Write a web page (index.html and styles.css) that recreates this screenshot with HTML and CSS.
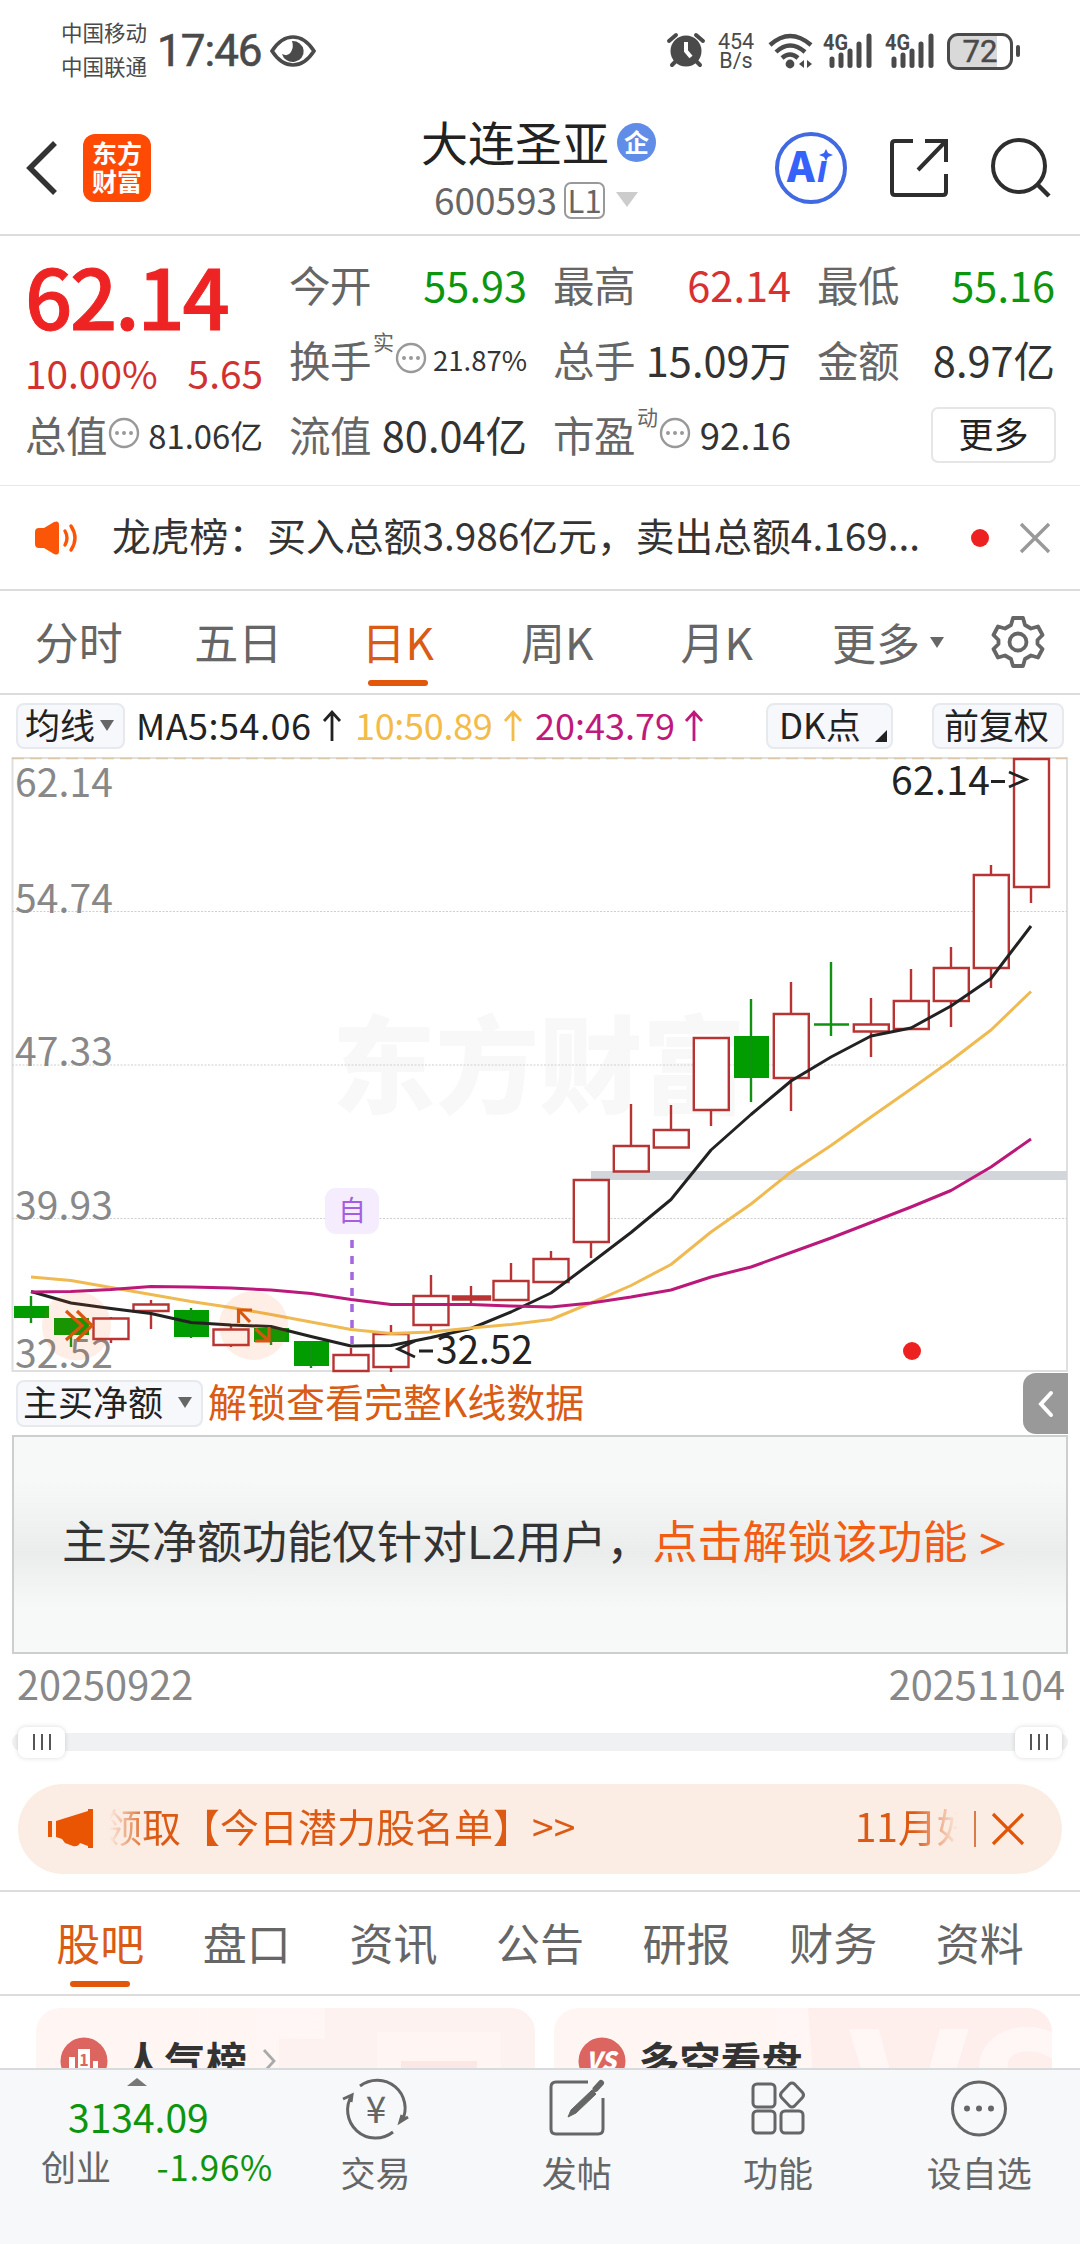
FILE: index.html
```html
<!DOCTYPE html>
<html lang="zh-CN">

<head>
    <title>大连圣亚 600593</title>
    <meta charset="UTF-8">
    <link rel="stylesheet" href="styles.css">
</head>

<body>
    <div class="status-bar">
        <div class="carriers">
            <span>中国移动</span>
            <span>中国联通</span>
        </div>
        <span class="clock">17:46</span>
        <svg class="eye" width="46" height="32" viewBox="0 0 46 32">
            <path d="M2 16Q11 2 23 2Q35 2 44 16Q35 30 23 30Q11 30 2 16Z" fill="none" stroke="#4a4a4a" stroke-width="3.6" />
            <path d="M22 6a11 10.500 0 1 1-10 13q6 3 9-2q3-5 1-11Z" fill="#4a4a4a" />
        </svg>
        <svg class="alarm" width="38" height="36" viewBox="0 0 38 36">
            <circle cx="19" cy="19" r="15.500" fill="#4a4a4a" />
            <path d="M2 9L9 3M36 9L29 3M9 29L5 33M29 29L33 33" fill="none" stroke="#4a4a4a" stroke-width="4" stroke-linecap="round" />
            <path d="M19 10V19L24 25" fill="none" stroke="#fff" stroke-width="4" />
        </svg>
        <div class="net-speed">
            <span>454</span>
            <span>B/s</span>
        </div>
        <svg class="wifi" width="46" height="36" viewBox="0 0 46 36">
            <path d="M2 12Q22-6 43 12M8 19Q22 6 37 19M14 25Q22 18 30 25" fill="none" stroke="#4a4a4a" stroke-width="4.4" />
            <circle cx="22" cy="31" r="4.4" fill="#4a4a4a" />
            <path d="M36 27V35L31 31ZM39 27V35L44 31Z" fill="#4a4a4a" />
        </svg>
        <svg class="signal" width="50" height="36" viewBox="0 0 50 36">
            <text x="0" y="17" class="signal-text" textLength="25" lengthAdjust="spacingAndGlyphs">4G</text>
            <path d="M9 26V32.500M18 22V32.500M27 18V32.500M36 11V32.500M46 3V32.500" stroke="#4a4a4a" stroke-width="5" stroke-linecap="round" />
        </svg>
        <svg class="signal" width="50" height="36" viewBox="0 0 50 36">
            <text x="0" y="17" class="signal-text" textLength="25" lengthAdjust="spacingAndGlyphs">4G</text>
            <path d="M9 26V32.500M18 22V32.500M27 18V32.500M36 11V32.500M46 3V32.500" stroke="#4a4a4a" stroke-width="5" stroke-linecap="round" />
        </svg>
        <div class="battery"><span>72</span></div>
        <div class="battery-tip"></div>
    </div>

    <header class="header">
        <div class="header-left">
            <svg width="34" height="56" viewBox="0 0 34 56">
                <path d="M29 3L4 28L29 53" fill="none" stroke="#333" stroke-width="5.5" />
            </svg>
            <div class="logo"><span>东方</span><span>财富</span></div>
        </div>
        <div class="stock">
            <div class="stock-name">大连圣亚<span class="corp">企</span></div>
            <div class="stock-code">600593<span class="level">L1</span><i class="tri tri-code"></i></div>
        </div>
        <div class="header-right">
            <svg width="74" height="74" viewBox="0 0 74 74">
                <circle cx="37" cy="37" r="34" fill="#fff" stroke="#4169e1" stroke-width="4" />
                <text x="13" y="51" class="ai-text">A</text>
                <text x="43" y="51" class="ai-text ai-i">ı</text>
                <path d="M52 18L54 22L59 24L54 26L52 30L50 26L45 24L50 22Z" fill="#3662fa" />
            </svg>
            <svg width="60" height="60" viewBox="0 0 60 60">
                <path d="M24 3H6Q3 3 3 6V54Q3 57 6 57H54Q57 57 57 54V36M36 3H57V24M56 4L29 32" fill="none" stroke="#2e2e2e" stroke-width="4" />
            </svg>
            <svg width="62" height="62" viewBox="0 0 62 62">
                <circle cx="29" cy="29" r="26" fill="none" stroke="#2e2e2e" stroke-width="4" />
                <path d="M47 47L59 59" stroke="#2e2e2e" stroke-width="4.5" />
            </svg>
        </div>
    </header>

    <section class="quote">
        <div class="quote-col quote-main">
            <div class="price">62.14</div>
            <div class="change"><span>10.00%</span><span>5.65</span></div>
            <div class="cell">
                <span class="label">总值</span>
                <svg class="more-dot" width="32" height="32" viewBox="0 0 32 32"><circle cx="16" cy="16" r="14" fill="none" stroke="#999" stroke-width="2.4" /><path d="M9 16h0M16 16h0M23 16h0" stroke="#999" stroke-width="4" stroke-linecap="round" /></svg>
                <span class="value value-md">81.06亿</span>
            </div>
        </div>
        <div class="quote-col">
            <div class="cell"><span class="label">今开</span><span class="value green">55.93</span></div>
            <div class="cell">
                <span class="label">换手</span><sup>实</sup>
                <svg class="more-dot" width="32" height="32" viewBox="0 0 32 32"><circle cx="16" cy="16" r="14" fill="none" stroke="#999" stroke-width="2.4" /><path d="M9 16h0M16 16h0M23 16h0" stroke="#999" stroke-width="4" stroke-linecap="round" /></svg>
                <span class="value value-sm">21.87%</span>
            </div>
            <div class="cell"><span class="label">流值</span><span class="value">80.04亿</span></div>
        </div>
        <div class="quote-col">
            <div class="cell"><span class="label">最高</span><span class="value red">62.14</span></div>
            <div class="cell"><span class="label">总手</span><span class="value">15.09万</span></div>
            <div class="cell">
                <span class="label">市盈</span><sup>动</sup>
                <svg class="more-dot" width="32" height="32" viewBox="0 0 32 32"><circle cx="16" cy="16" r="14" fill="none" stroke="#999" stroke-width="2.4" /><path d="M9 16h0M16 16h0M23 16h0" stroke="#999" stroke-width="4" stroke-linecap="round" /></svg>
                <span class="value value-lg">92.16</span>
            </div>
        </div>
        <div class="quote-col">
            <div class="cell"><span class="label">最低</span><span class="value green">55.16</span></div>
            <div class="cell"><span class="label">金额</span><span class="value">8.97亿</span></div>
            <div class="cell"><button class="more-button">更多</button></div>
        </div>
    </section>

    <div class="notice">
        <svg width="46" height="36" viewBox="0 0 46 36">
            <path d="M1 12Q1 8 5 8H10L20 2Q25 0 25 5V31Q25 36 20 34L10 28H5Q1 28 1 24Z" fill="#fb5607" />
            <path d="M31 11Q35 18 31 25M37 6Q45 18 37 30" fill="none" stroke="#fb5607" stroke-width="3.4" stroke-linecap="round" />
        </svg>
        <span class="notice-text">龙虎榜：买入总额3.986亿元，卖出总额4.169...</span>
        <i class="red-dot"></i>
        <svg width="30" height="30" viewBox="0 0 30 30">
            <path d="M1 1L29 29M29 1L1 29" stroke="#999" stroke-width="3.4" />
        </svg>
    </div>

    <nav class="k-tabs">
        <span>分时</span>
        <span>五日</span>
        <span class="active">日K</span>
        <span>周K</span>
        <span>月K</span>
        <span class="k-more">更多<i class="tri"></i></span>
        <svg width="54" height="54" viewBox="0 0 54 54">
            <path d="M22 3H32L34 10L40 13.500L47 11.500L51.500 20L46.500 25V29L51.500 34L47 42.500L40 40.500L34 44L32 51H22L20 44L14 40.500L7 42.500L2.500 34L7.500 29V25L2.500 20L7 11.500L14 13.500L20 10Z" fill="none" stroke="#666" stroke-width="3.8" stroke-linejoin="round" />
            <circle cx="27" cy="27" r="8.500" fill="none" stroke="#666" stroke-width="3.800" />
        </svg>
    </nav>

    <div class="ma-row">
        <span class="chip chip-ma">均线<i class="tri"></i></span>
        <span class="ma ma5">MA5:54.06</span>
        <svg width="18" height="31" viewBox="0 0 18 31"><path d="M9 31V2M1 11L9 2L17 11" fill="none" stroke="#222" stroke-width="2.8" /></svg>
        <span class="ma ma10">10:50.89</span>
        <svg width="18" height="31" viewBox="0 0 18 31"><path d="M9 31V2M1 11L9 2L17 11" fill="none" stroke="#f3bb4a" stroke-width="2.8" /></svg>
        <span class="ma ma20">20:43.79</span>
        <svg width="18" height="31" viewBox="0 0 18 31"><path d="M9 31V2M1 11L9 2L17 11" fill="none" stroke="#bf1a7b" stroke-width="2.8" /></svg>
        <span class="chip chip-dk">DK点<i class="corner"></i></span>
        <span class="chip chip-fq">前复权</span>
    </div>

    <svg class="chart" width="1080" height="622" viewBox="0 752 1080 622">
        <text x="332" y="1105" class="watermark" textLength="414" lengthAdjust="spacingAndGlyphs">东方财富</text>

        <!-- frame and grid -->
        <path d="M12.500 758V1371H1067V758Z" fill="none" stroke="#dfdfdf" stroke-width="2" />
        <path d="M12 758.500H1067" stroke="#d8c8a8" stroke-width="1.500" stroke-dasharray="12 6" />
        <path d="M12 911.500H1067M12 1065H1067M12 1218.500H1067" stroke="#cfcfcf" stroke-width="1.200" stroke-dasharray="2 1.500" />

        <g class="axis">
            <text x="15" y="796.500" textLength="98">62.14</text>
            <text x="15" y="912.500" textLength="98">54.74</text>
            <text x="15" y="1065.500" textLength="98">47.33</text>
            <text x="15" y="1219.500" textLength="98">39.93</text>
            <text x="15" y="1368" textLength="98">32.52</text>
        </g>

        <rect x="591" y="1171" width="476" height="9" fill="#d2d5da" />

        <!-- green candles -->
        <path d="M14 1306h35v12h-35zM54 1318h35v17h-35zM174 1310h35v27h-35zM254 1328h35v14h-35zM294 1341h35v25h-35zM734 1036h35v42h-35z" fill="#009c00" />
        <path d="M31 1296V1323M71 1318V1347M191 1308V1338M271 1328V1345M311 1341V1368M751 999V1102M831 962V1036M814 1024.500H849" stroke="#0f920f" stroke-width="2.400" />

        <!-- red candles -->
        <g fill="#fff" stroke="#b83434" stroke-width="2.400">
            <path d="M111 1317V1343M151 1300V1304M151 1311V1329M231 1326V1347M351 1348V1355M391 1325V1334M391 1367V1372M431 1275V1296M431 1325V1331M471 1286V1303M511 1263V1281M551 1251V1283M591 1242V1258M631 1104V1146M671 1105V1130M711 1110V1126M791 982V1014M791 1078V1111M871 998V1024M871 1032V1057M911 969V1001M951 947V968M951 1001V1027M991 865V875M991 968V988M1031 887V903" />
            <path d="M93.500 1318.500h35v20.500h-35zM133.500 1304.500h35v6.500h-35zM213.500 1329.500h35v15.500h-35zM333.500 1355h35v16h-35zM373.500 1334h35v33h-35zM413.500 1296h35v29h-35zM493.500 1281h35v19h-35zM533.500 1259h35v23h-35zM573.800 1180h35v62h-35zM613.800 1146h35v25.500h-35zM653.800 1130h35v17.500h-35zM693.800 1038h35v72h-35zM773.800 1014h35v64h-35zM853.800 1024.500h35v7h-35zM893.800 1001h35v28h-35zM933.800 968h35v33h-35zM973.800 875h35v93h-35zM1014 759h35v128h-35z" />
            <path d="M453 1296.500h37v3h-37z" fill="#c43232" />
        </g>

        <!-- MA lines -->
        <g fill="none" stroke-width="3" stroke-linejoin="round">
            <polyline stroke="#222" points="31,1291.500 71,1303 111,1308.500 151,1313.500 191,1322.500 231,1325 271,1326.500 311,1336.500 351,1346 391,1345.500 431,1337.500 471,1328.500 511,1312 551,1293 591,1263 631,1232.500 671,1199.500 711,1150 751,1114.500 791,1081 831,1057 871,1036 911,1028 951,1006 991,978.500 1031,926" />
            <polyline stroke="#f0ba52" points="31,1277 71,1280.500 111,1287.500 151,1294.500 191,1301.500 231,1307.500 271,1314.500 311,1322 351,1329.500 391,1333.500 431,1332 471,1328 511,1324.500 551,1319.500 591,1303 631,1285.500 671,1264.500 711,1232 751,1204 791,1172 831,1145.500 871,1117 911,1089 951,1060.500 991,1030 1031,991.500" />
            <polyline stroke="#bb1979" points="31,1292 71,1291.500 111,1289.500 151,1286.500 191,1287 231,1288 271,1290 311,1293.500 351,1299.500 391,1304.500 431,1304.500 471,1304.500 511,1306 551,1307 591,1303 631,1297 671,1290 711,1277 751,1267 791,1252.500 831,1238 871,1222.500 911,1207 951,1190.500 991,1167 1031,1139" />
        </g>

        <!-- chart tool hints -->
        <circle cx="76.500" cy="1326" r="34.500" fill="#f55a0a" fill-opacity="0.1" />
        <circle cx="253.500" cy="1325.500" r="34.500" fill="#f55a0a" fill-opacity="0.1" />
        <path d="M66 1311L82 1325.500L66 1340M77 1311L92 1325.500L77 1340M252 1310H238.500V1323M239 1310.500L250 1322M255 1341H269V1327M268.500 1340.500L255.500 1329" fill="none" stroke="#d9560f" stroke-width="3.200" />

        <path d="M352 1240V1349" stroke="#a566e0" stroke-width="3.500" stroke-dasharray="8 8" />
        <rect x="325" y="1188" width="54" height="46" rx="11" fill="#f5edfe" />
        <text x="352" y="1221" class="self-mark">自</text>

        <text x="891" y="794.500" class="mark" textLength="99">62.14</text>
        <path d="M991 781.500H1005M1009 772L1026 779.500L1009 787" fill="none" stroke="#222" stroke-width="2.800" />
        <text x="436" y="1363.500" class="mark" textLength="97">32.52</text>
        <path d="M415 1341L398 1349L415 1357M419 1351H433" fill="none" stroke="#222" stroke-width="2.800" />
        <circle cx="912" cy="1351" r="9" fill="#ee2121" />
    </svg>

    <div class="sub-row">
        <span class="chip chip-sub">主买净额<i class="tri"></i></span>
        <span class="unlock">解锁查看完整K线数据</span>
        <span class="side-tab">
            <svg width="18" height="28" viewBox="0 0 18 28"><path d="M14 3L4 14L14 25" fill="none" stroke="#fff" stroke-width="4" stroke-linecap="round" /></svg>
        </span>
    </div>

    <div class="lock-panel">
        <span>主买净额功能仅针对L2用户，</span><a>点击解锁该功能</a>
        <svg width="24" height="22" viewBox="0 0 24 22"><path d="M1 2L21 11L1 20" fill="none" stroke="#f25c14" stroke-width="3.400" /></svg>
    </div>

    <div class="dates"><span>20250922</span><span>20251104</span></div>

    <div class="slider">
        <span class="handle"><i></i><i></i><i></i></span>
        <span class="handle"><i></i><i></i><i></i></span>
    </div>

    <div class="promo">
        <svg class="horn" width="46" height="40" viewBox="0 0 46 40">
            <path d="M0 12H4V28H0ZM8 12L40 2V0H45V39H40V37L32 34Q30 38 25 37L17 34L14 30L8 28Z" fill="#ea5504" />
        </svg>
        <div class="promo-text"><span>领取【今日潜力股名单】&gt;&gt;</span><span class="promo-next">11月好</span></div>
        <i class="promo-line"></i>
        <svg width="32" height="32" viewBox="0 0 32 32"><path d="M1 1L31 31M31 1L1 31" stroke="#e25507" stroke-width="3.200" /></svg>
    </div>

    <nav class="info-tabs">
        <span class="active">股吧</span>
        <span>盘口</span>
        <span>资讯</span>
        <span>公告</span>
        <span>研报</span>
        <span>财务</span>
        <span>资料</span>
    </nav>

    <div class="cards">
        <div class="card card-rank">
            <svg class="card-bg" width="499" height="106" viewBox="0 0 499 106">
                <path d="M243 31H289V0H499V106H243Z" fill="#fef2f0" />
                <path d="M341 24H465V106H341Z" fill="#fff6f4" />
                <path d="M365 53H441V106H365Z" fill="#fbe7e4" />
            </svg>
            <svg width="48" height="48" viewBox="0 0 48 48">
                <circle cx="24" cy="24" r="23.500" fill="#dc6560" />
                <path d="M9 20h6v16h-6zM18 12h12v24h-12zM33 24h5v12h-5z" fill="#fff" />
                <text x="24" y="29" class="rank-text">1</text>
            </svg>
            <span>人气榜</span>
            <svg class="card-arrow" width="16" height="26" viewBox="0 0 16 26"><path d="M3 2L13 13L3 24" fill="none" stroke="#aaa" stroke-width="2.800" /></svg>
        </div>
        <div class="card card-vs">
            <svg class="card-bg" width="499" height="106" viewBox="0 0 499 106">
                <path d="M254 0H499V106H262Z" fill="#feefed" />
                <text x="296" y="162" class="vs-ghost">VS</text>
            </svg>
            <svg width="48" height="48" viewBox="0 0 48 48">
                <circle cx="24" cy="24" r="23.500" fill="#dc6560" />
                <text x="23" y="33" class="vs-text" textLength="30" lengthAdjust="spacingAndGlyphs">VS</text>
            </svg>
            <span>多空看盘</span>
        </div>
    </div>

    <footer class="bottom-bar">
        <div class="index">
            <i class="tri-up"></i>
            <div class="index-value">3134.09</div>
            <div class="index-row"><span>创业</span><span class="green">-1.96%</span></div>
        </div>
        <div class="action">
            <svg width="66" height="60" viewBox="0 0 66 60" fill="none" stroke="#666" stroke-width="3">
                <path d="M17 7A28 28 0 0 1 59 42M50 53A28 28 0 0 1 9 16M0 20L9 16L8 23M65 38L57 43L59 36" />
                <text x="33" y="44" class="yuan">¥</text>
            </svg>
            <span>交易</span>
        </div>
        <div class="action">
            <svg width="60" height="60" viewBox="0 0 60 60" fill="none" stroke="#666" stroke-width="3">
                <path d="M41 3H9Q4 3 4 8V50Q4 55 9 55H51Q56 55 56 50V19" />
                <path d="M48.500 10L54 4" stroke-width="6" stroke-linecap="round" />
                <path d="M45 11L49 15L29 34L21 38L24 31Z" fill="#666" stroke-width="1" />
            </svg>
            <span>发帖</span>
        </div>
        <div class="action">
            <svg width="56" height="60" viewBox="0 0 56 60" fill="none" stroke="#666" stroke-width="3">
                <rect x="3" y="5" width="22" height="23" rx="4" />
                <rect x="3" y="32" width="22" height="22" rx="4" />
                <rect x="31" y="32" width="22" height="22" rx="4" />
                <path d="M39.500 5Q42 3 44.500 5L52.500 13.500Q54.500 16 52.500 18.500L44.500 27Q42 29 39.500 27L31.500 18.500Q29.500 16 31.500 13.500Z" />
            </svg>
            <span>功能</span>
        </div>
        <div class="action">
            <svg width="60" height="60" viewBox="0 0 60 60">
                <circle cx="30" cy="29.500" r="26.500" fill="none" stroke="#666" stroke-width="3" />
                <path d="M18 29.500h0M30 29.500h0M42 29.500h0" stroke="#666" stroke-width="6" stroke-linecap="round" />
            </svg>
            <span>设自选</span>
        </div>
    </footer>
</body>

</html>
```

FILE: styles.css
```css
* {
    box-sizing: border-box;
}

body {
    font-family: "Noto Sans CJK SC", sans-serif;
    width: 1080px;
    height: 2244px;
    margin: 0;
    overflow: hidden;
    background-color: #fff;
    color: #333;
    display: flex;
    flex-direction: column;
}

body > * {
    flex: none;
}

svg {
    display: block;
    flex: none;
    overflow: visible;
}

span,
.price,
.stock-code,
.index-value {
    white-space: nowrap;
}

.green {
    color: #0e950e;
}

.red {
    color: #d93030;
}

.tri {
    width: 0;
    height: 0;
    border: 7px solid transparent;
    border-top: 11px solid #666;
    border-bottom: 0;
}

/* status bar */
.status-bar {
    height: 99px;
    padding: 3px 0 0 61px;
    display: flex;
    align-items: center;
    color: #4a4a4a;
}

.carriers {
    display: flex;
    flex-direction: column;
    margin-top: -4px;
    font-size: 21.5px;
    line-height: 34px;
}

.clock {
    font-family: Roboto, sans-serif;
    font-size: 44px;
    font-weight: 400;
    width: 104px;
    margin-left: 10px;
    letter-spacing: -1px;
    -webkit-text-stroke: 0.6px #4a4a4a;
}

.eye {
    margin-left: 9px;
}

.alarm {
    margin-left: 351px;
    margin-top: -2px;
}

.net-speed {
    display: flex;
    flex-direction: column;
    align-items: center;
    width: 38px;
    margin-left: 12px;
    font-family: Roboto, sans-serif;
    font-size: 21.500px;
    line-height: 19px;
}

.wifi {
    margin-left: 13px;
}

.signal {
    margin-left: 9px;
}

.signal + .signal {
    margin-left: 12px;
}

.signal-text {
    font-family: Roboto, sans-serif;
    font-size: 22px;
    font-weight: 700;
    fill: #4a4a4a;
}

.battery {
    width: 66px;
    height: 37px;
    margin-left: 12px;
    border: 3px solid #4a4a4a;
    border-radius: 11px;
    background: linear-gradient(to right, #d9d9d9 78%, #fff 78%);
    font-family: Roboto, sans-serif;
    font-size: 31px;
    line-height: 32px;
    text-align: center;
    -webkit-text-stroke: 0.5px #4a4a4a;
}

.battery-tip {
    width: 4px;
    height: 12px;
    margin-left: 3px;
    border-radius: 2px;
    background-color: #4a4a4a;
}

/* header */
.header {
    height: 137px;
    padding: 2px 29px 0 26px;
    display: grid;
    grid-template-columns: 1fr auto 1fr;
    align-items: center;
    border-bottom: 2px solid #dcdcdc;
}

.header-left,
.header-right {
    display: flex;
    align-items: center;
}

.header-right {
    justify-content: flex-end;
    gap: 41px;
}

.header-right svg {
    position: relative;
    left: 1px;
}

.logo {
    width: 68px;
    height: 68px;
    margin-left: 23px;
    border-radius: 12px;
    background-color: #ff4a06;
    color: #fff;
    font-size: 25px;
    font-weight: 700;
    line-height: 28px;
    display: flex;
    flex-direction: column;
    align-items: center;
    padding-top: 4px;
}

.stock-name {
    display: flex;
    align-items: center;
    justify-content: center;
    font-size: 47px;
    line-height: 54px;
    color: #222;
    margin-top: 6px;
}

.corp {
    width: 39px;
    height: 39px;
    margin: 3px 0 0 8px;
    border-radius: 50%;
    background-color: #5f8de8;
    color: #fff;
    font-size: 25px;
    font-weight: 700;
    line-height: 36px;
    text-align: center;
}

.stock-code {
    display: flex;
    align-items: center;
    justify-content: center;
    height: 56px;
    font-size: 37px;
    line-height: 50px;
    color: #666;
    margin: 3px 5px 0 0;
}

.level {
    width: 41px;
    height: 37px;
    margin: 2px 0 0 7px;
    border: 2px solid #999;
    border-radius: 7px;
    font-size: 31px;
    line-height: 31px;
    text-align: center;
}

.tri-code {
    margin-left: 11px;
    border-width: 15px 11px 0;
    border-top-color: #ccc;
}

.ai-text {
    font-size: 42px;
    font-weight: 900;
    fill: #3662fa;
}

.ai-i {
    font-size: 38px;
    font-style: italic;
}

/* quote */
.quote {
    height: 250px;
    padding: 11px 25px 0 26px;
    display: flex;
    gap: 27px;
    border-bottom: 1px solid #e8e8e8;
}

.quote-col {
    width: 237px;
}

.cell {
    display: flex;
    align-items: center;
    height: 75px;
    font-size: 41.500px;
    line-height: 75px;
}

.label {
    color: #666;
    margin-left: -1px;
    letter-spacing: -0.5px;
}

.value {
    margin-left: auto;
}

.value-sm {
    font-size: 27.500px;
}

.value-md {
    font-size: 32.800px;
}

.value-lg {
    font-size: 36.500px;
}

sup {
    font-size: 21px;
    line-height: 22px;
    color: #666;
    margin: -38px 0 0 2px;
    vertical-align: baseline;
}

.more-dot {
    margin-left: 1px;
    margin-top: -4px;
}

.price {
    height: 100px;
    margin-left: -1px;
    font-size: 83px;
    font-weight: 500;
    line-height: 94px;
    letter-spacing: -2.300px;
    color: #ee2424;
    -webkit-text-stroke: 1px #ee2424;
}

.change {
    display: flex;
    justify-content: space-between;
    height: 50px;
    margin-left: -1px;
    font-size: 38.800px;
    line-height: 50px;
    color: #d33131;
}

.more-button {
    width: 125px;
    height: 56px;
    margin: 1px -1px 0 auto;
    padding: 0 0 4px;
    border: 2px solid #e6e6e6;
    border-radius: 7px;
    background-color: #fff;
    color: #222;
    font-family: inherit;
    font-size: 35px;
    line-height: 48px;
}

/* notice */
.notice {
    height: 105px;
    padding: 0 30px 0 34px;
    display: flex;
    align-items: center;
    border-bottom: 2px solid #dcdcdc;
}

.notice-text {
    margin: -7px 0 0 32px;
    width: 820px;
    font-size: 38.800px;
}

.red-dot {
    width: 18px;
    height: 18px;
    margin: 0 31px 0 40px;
    border-radius: 50%;
    background-color: #ee2121;
}

/* kline tabs */
.k-tabs {
    height: 104px;
    display: flex;
    align-items: center;
    border-bottom: 2px solid #dcdcdc;
    font-size: 44px;
    color: #666;
}

.k-tabs span {
    position: relative;
    left: -1px;
    width: 159.500px;
    line-height: 100px;
    height: 102px;
    text-align: center;
}

.k-tabs .active,
.info-tabs .active {
    color: #d95b14;
}

.k-tabs .active::after,
.info-tabs .active::after {
    content: "";
    position: absolute;
    left: 50%;
    bottom: 7px;
    width: 60px;
    height: 6px;
    margin-left: -30px;
    border-radius: 3px;
    background-color: #e2570c;
}

.k-tabs .k-more {
    display: flex;
    align-items: center;
    justify-content: center;
    gap: 10px;
    width: 183px;
}

.k-tabs svg {
    margin-left: 10px;
}

/* MA row */
.ma-row {
    height: 57px;
    padding: 4px 0 0 16px;
    display: flex;
    align-items: center;
}

.chip {
    display: flex;
    align-items: center;
    height: 46px;
    padding-bottom: 4px;
    border: 2px solid #e6e9ee;
    border-radius: 8px;
    background-color: #f6f8fb;
    color: #222;
    font-size: 35px;
    line-height: 42px;
}

.chip-ma {
    width: 109px;
    padding-left: 7px;
    gap: 5px;
}

.chip-ma .tri,
.chip-sub .tri {
    margin-top: 4px;
}

.ma {
    font-size: 36px;
    line-height: 42px;
    margin-top: -4px;
}

.ma-row svg {
    margin-top: -1px;
}

.ma5 {
    width: 187px;
    margin-left: 11px;
    letter-spacing: 0.500px;
    color: #222;
}

.ma10 {
    width: 149px;
    margin-left: 14px;
    letter-spacing: -0.300px;
    color: #f3bb4a;
}

.ma20 {
    width: 150px;
    margin-left: 13px;
    color: #bf1a7b;
}

.chip-dk {
    width: 127px;
    margin-left: auto;
    padding-left: 11px;
}

.corner {
    align-self: flex-end;
    margin: 0 4px 1px auto;
    border-left: 12px solid transparent;
    border-bottom: 12px solid #222;
}

.chip-fq {
    width: 132px;
    margin: 0 16px 0 39px;
    padding-left: 10px;
}

/* chart */
.chart text {
    font-size: 39px;
}

.axis {
    fill: #888;
}

.mark {
    fill: #222;
}

.chart .watermark {
    font-size: 106px;
    font-weight: 900;
    fill: #f8f8f8;
}

.chart .self-mark {
    font-size: 28px;
    text-anchor: middle;
    fill: #a35fe0;
}

.sub-row {
    height: 61px;
    padding-left: 16px;
    margin-top: -1px;
    display: flex;
    align-items: center;
}

.chip-sub {
    width: 187px;
    height: 47px;
    padding-left: 5px;
    padding-bottom: 6px;
    gap: 15px;
}

.unlock {
    margin: -7px 0 0 5px;
    font-size: 39px;
    color: #d95b14;
}

.side-tab {
    width: 45px;
    height: 61px;
    margin: 0 12px 0 auto;
    border-radius: 13px 0 0 13px;
    background-color: #999;
    display: flex;
    align-items: center;
    padding-left: 14px;
}

.lock-panel {
    height: 219px;
    margin: 1px 12px 0;
    padding: 0 0 10px 48px;
    display: flex;
    align-items: center;
    border: 2px solid #cdcfcf;
    background: linear-gradient(#f7f9f8 20%, #ebedec 54%, #f7f9f8 80%);
    font-size: 45px;
}

.lock-panel a {
    margin-left: 1px;
    color: #f25c14;
    white-space: nowrap;
}

.lock-panel svg {
    margin: 8px 0 0 13px;
}

.dates {
    display: flex;
    justify-content: space-between;
    height: 73px;
    padding: 0 15px 0 17px;
    font-size: 39.700px;
    line-height: 58px;
    color: #888;
}

.slider {
    height: 18px;
    margin: 6px 12px 0;
    padding: 0 6px;
    border-radius: 9px;
    background-color: #f0f1f3;
    display: flex;
    justify-content: space-between;
    align-items: center;
}

.handle {
    display: flex;
    align-items: center;
    justify-content: center;
    gap: 6px;
    width: 47px;
    height: 31px;
    border-radius: 8px;
    background-color: #fff;
    box-shadow: 0 0 5px rgba(0, 0, 0, 0.15);
}

.handle i {
    width: 2px;
    height: 16px;
    background-color: #555;
}

/* promo */
.promo {
    height: 90px;
    margin: 33px 18px 0;
    padding: 0 38px 0 30px;
    display: flex;
    align-items: center;
    border-radius: 45px;
    background-color: #fcede4;
    color: #dc5a14;
}

.promo-text {
    display: flex;
    justify-content: space-between;
    width: 849px;
    margin: -9px 0 0 15px;
    overflow: hidden;
    font-size: 39px;
    line-height: 60px;
    -webkit-mask-image: linear-gradient(to right, transparent, #000 40px, #000 805px, transparent 849px);
    mask-image: linear-gradient(to right, transparent, #000 40px, #000 805px, transparent 849px);
}

.promo-text span {
    margin-left: -6px;
}

.promo-text .promo-next {
    margin: 0 -18px 0 0;
}

.promo-line {
    width: 2px;
    height: 36px;
    margin: 0 16px;
    background-color: #dc7a48;
}

/* info tabs */
.info-tabs {
    height: 106px;
    margin-top: 16px;
    padding: 0 27px;
    display: flex;
    border-top: 2px solid #dcdcdc;
    border-bottom: 2px solid #dcdcdc;
    font-size: 44px;
    color: #666;
}

.info-tabs span {
    position: relative;
    flex: 1;
    line-height: 100px;
    text-align: center;
}

.cards {
    display: flex;
    gap: 19px;
    height: 72px;
    padding: 12px 28px 0 36px;
    overflow: hidden;
}

.card {
    position: relative;
    display: flex;
    align-items: center;
    width: 499px;
    height: 106px;
    padding-left: 24px;
    border-radius: 24px;
    background: linear-gradient(to right, #fff6f4, #fff7f5);
    overflow: hidden;
    font-size: 41px;
    font-weight: 700;
    line-height: 60px;
    color: #333;
}

.card > * {
    position: relative;
}

.card .card-bg {
    position: absolute;
    left: 0;
    top: 0;
}

.card span {
    margin: -4px 0 0 20px;
}

.card-rank span {
    margin-left: 15px;
    letter-spacing: 0.500px;
}

.card-vs span {
    margin-left: 13px;
}

.card-arrow {
    margin-left: 13px;
}

.rank-text {
    font-size: 16px;
    text-anchor: middle;
    fill: #dc6560;
}

.vs-text {
    font-size: 25px;
    font-weight: 900;
    font-style: italic;
    text-anchor: middle;
    fill: #fff;
}

.vs-ghost {
    font-size: 190px;
    font-weight: 700;
    fill: #fff7f5;
}

/* bottom bar */
.bottom-bar {
    display: flex;
    height: 177px;
    border-top: 2px solid #d8dadd;
    background-color: #f6f8fa;
    color: #666;
}

.index {
    width: 275px;
    padding-top: 8px;
}

.tri-up {
    display: block;
    width: 0;
    margin-left: 127px;
    border: 10.500px solid transparent;
    border-top: 0;
    border-bottom: 8px solid #777;
}

.index-value {
    margin-left: 68px;
    font-size: 39px;
    line-height: 60px;
    color: #0e950e;
}

.index-row {
    display: flex;
    justify-content: space-between;
    padding: 0 2px 0 41px;
    font-size: 35px;
    line-height: 40px;
}

.index-row .green {
    letter-spacing: 0.700px;
}

.yuan {
    font-size: 37px;
    text-anchor: middle;
    fill: #666;
    stroke: none;
}

.action {
    flex: 1;
    display: flex;
    flex-direction: column;
    align-items: center;
    padding-top: 9px;
    font-size: 35px;
}

.action span {
    line-height: 66px;
}
```
